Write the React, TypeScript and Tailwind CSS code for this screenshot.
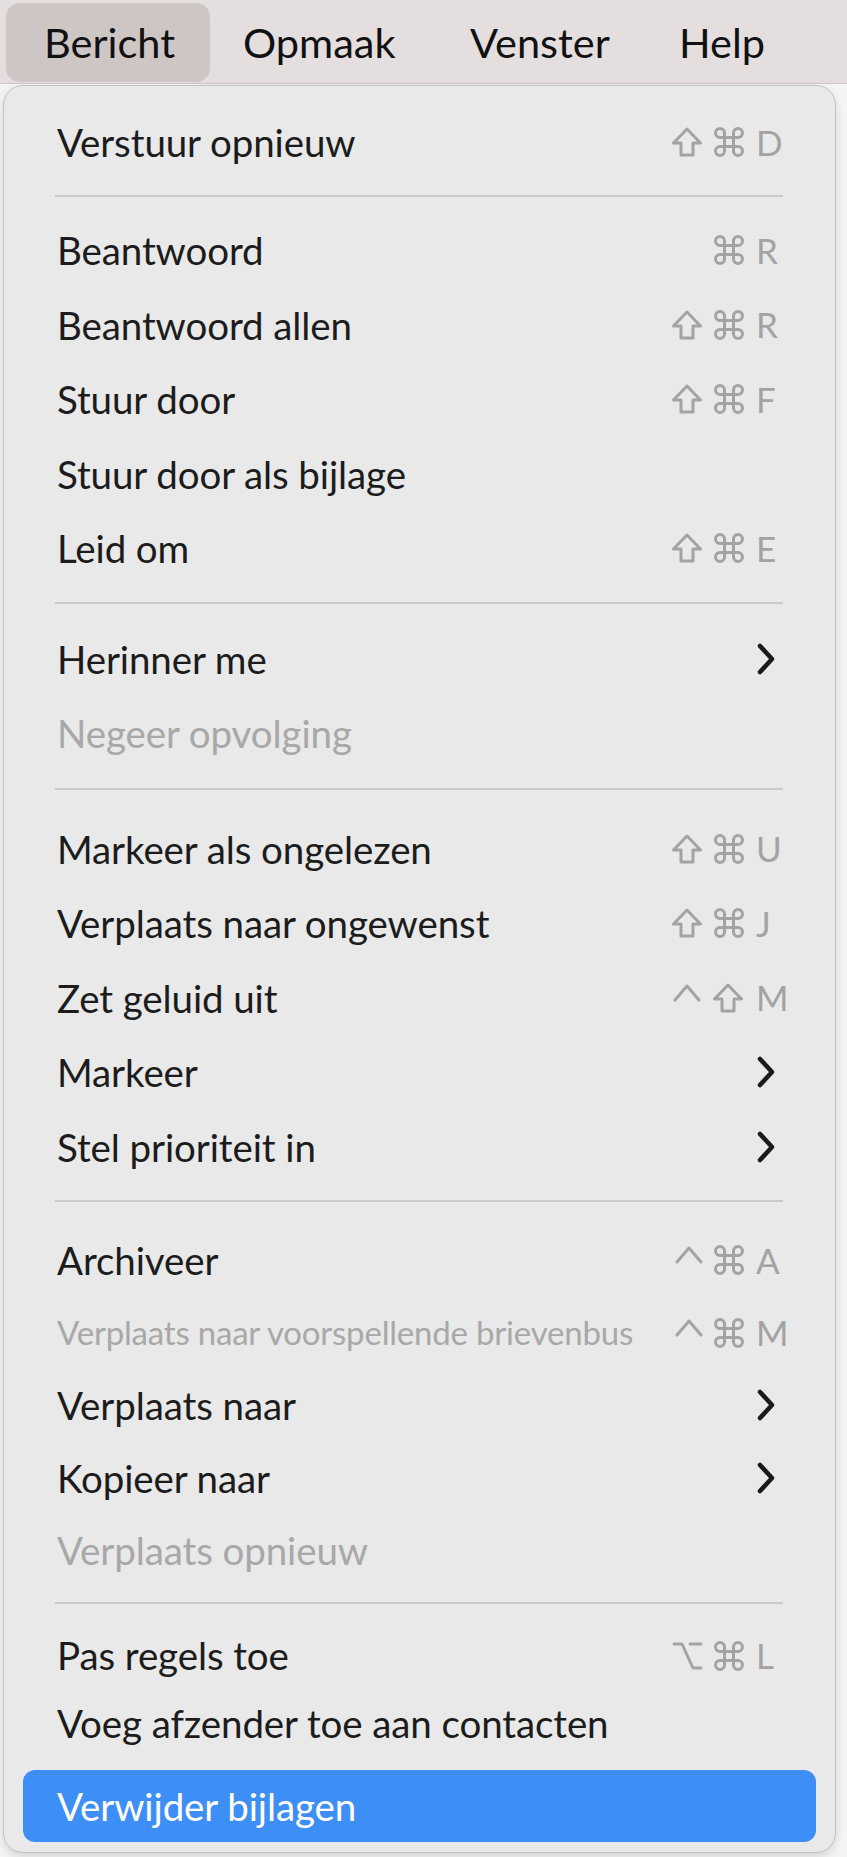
import React from "react";

type Mod = "shift" | "cmd" | "ctrl" | "opt";

type Item = {
  label: string;
  mods?: Mod[];
  key?: string;
  sub?: boolean;
  disabled?: boolean;
  small?: boolean;
  h: string;
  extra?: string;
  active?: boolean;
};

function ModIcon({ m }: { m: Mod }) {
  const c = "#a3a3a3";
  if (m === "shift") {
    return (
      <svg width="32" height="30" viewBox="0 0 32 30" className="block">
        <path
          d="M16 2 L29.5 16 H22 V28 H10 V16 H2.5 Z"
          fill="none"
          stroke={c}
          strokeWidth="3"
          strokeLinejoin="round"
        />
      </svg>
    );
  }
  if (m === "cmd") {
    return (
      <svg width="30" height="30" viewBox="2 2 20 20" className="block">
        <path
          d="M15 6v12a3 3 0 1 0 3-3H6a3 3 0 1 0 3 3V6a3 3 0 1 0-3 3h12a3 3 0 1 0-3-3"
          fill="none"
          stroke={c}
          strokeWidth="2"
          strokeLinecap="round"
          strokeLinejoin="round"
        />
      </svg>
    );
  }
  if (m === "ctrl") {
    return (
      <svg width="28" height="30" viewBox="0 0 28 30" className="block">
        <polyline
          points="2,17 14,3 26,17"
          fill="none"
          stroke={c}
          strokeWidth="3"
          strokeLinecap="round"
          strokeLinejoin="round"
        />
      </svg>
    );
  }
  return (
    <svg width="31" height="30" viewBox="0 0 31 30" className="block">
      <path
        d="M2 3 H10 L21 27 H29 M18 3 H29"
        fill="none"
        stroke={c}
        strokeWidth="3"
        strokeLinecap="round"
        strokeLinejoin="round"
      />
    </svg>
  );
}

function Chevron({ white }: { white?: boolean }) {
  return (
    <svg width="20" height="34" viewBox="0 0 20 34" className="block">
      <polyline
        points="4,4 16,17 4,30"
        fill="none"
        stroke={white ? "#ffffff" : "#1a1a1a"}
        strokeWidth="4.5"
        strokeLinecap="round"
        strokeLinejoin="round"
      />
    </svg>
  );
}

function Row({ it }: { it: Item }) {
  const textColor = it.active
    ? "text-white"
    : it.disabled
    ? "text-[#a8a8a8]"
    : "text-[#1c1c1c]";
  return (
    <div
      className={`${it.h} ${it.extra ?? ""} ${
        it.active ? "bg-[#3e8ef7] rounded-[12px]" : ""
      } flex items-center pl-[34px] pr-[30px]`}
    >
      <div
        className={`flex-1 ${textColor} ${
          it.small ? "text-[33px] tracking-[-0.2px]" : "text-[38.5px] tracking-[-0.1px]"
        } leading-none whitespace-nowrap`}
      >
        {it.label}
      </div>
      {it.mods && (
        <div className="flex items-center gap-[11px] mr-[12px]">
          {it.mods.map((m, i) => (
            <ModIcon key={i} m={m} />
          ))}
        </div>
      )}
      {(it.key || it.sub || it.mods) && (
        <div className="w-[30px] flex items-center">
          {it.key && (
            <span className="text-[#a3a3a3] text-[35px] leading-none">
              {it.key}
            </span>
          )}
          {it.sub && <Chevron white={it.active} />}
        </div>
      )}
    </div>
  );
}

function Sep({ cls }: { cls: string }) {
  return <div className={`${cls} ml-[32px] w-[728px] h-[2px] bg-[#cbcbcb]`} />;
}

export default function App() {
  const s1: Item[] = [
    { label: "Verstuur opnieuw", mods: ["shift", "cmd"], key: "D", h: "h-[74px]" },
  ];
  const s2: Item[] = [
    { label: "Beantwoord", mods: ["cmd"], key: "R", h: "h-[74.5px]" },
    { label: "Beantwoord allen", mods: ["shift", "cmd"], key: "R", h: "h-[74.5px]" },
    { label: "Stuur door", mods: ["shift", "cmd"], key: "F", h: "h-[74.5px]" },
    { label: "Stuur door als bijlage", h: "h-[74.5px]" },
    { label: "Leid om", mods: ["shift", "cmd"], key: "E", h: "h-[74.5px]" },
  ];
  const s3: Item[] = [
    { label: "Herinner me", sub: true, h: "h-[74.5px]" },
    { label: "Negeer opvolging", disabled: true, h: "h-[74.5px]" },
  ];
  const s4: Item[] = [
    { label: "Markeer als ongelezen", mods: ["shift", "cmd"], key: "U", h: "h-[74.5px]" },
    { label: "Verplaats naar ongewenst", mods: ["shift", "cmd"], key: "J", h: "h-[74.5px]" },
    { label: "Zet geluid uit", mods: ["ctrl", "shift"], key: "M", h: "h-[74.5px]" },
    { label: "Markeer", sub: true, h: "h-[74.5px]" },
    { label: "Stel prioriteit in", sub: true, h: "h-[74.5px]" },
  ];
  const s5: Item[] = [
    { label: "Archiveer", mods: ["ctrl", "cmd"], key: "A", h: "h-[72.5px]" },
    {
      label: "Verplaats naar voorspellende brievenbus",
      mods: ["ctrl", "cmd"],
      key: "M",
      disabled: true,
      small: true,
      h: "h-[72.5px]",
    },
    { label: "Verplaats naar", sub: true, h: "h-[72.5px]" },
    { label: "Kopieer naar", sub: true, h: "h-[72.5px]" },
    { label: "Verplaats opnieuw", disabled: true, h: "h-[72.5px]" },
  ];
  const s6: Item[] = [
    { label: "Pas regels toe", mods: ["opt", "cmd"], key: "L", h: "h-[72px]" },
    { label: "Voeg afzender toe aan contacten", h: "h-[64px]" },
    {
      label: "Verwijder bijlagen",
      h: "h-[72px]",
      extra: "mt-[14.5px]",
      active: true,
    },
  ];

  return (
    <div className="w-[847px] h-[1857px] bg-[#f4f4f4] overflow-hidden font-['Lato',sans-serif]">
      {/* menu bar */}
      <div className="h-[84px] bg-[#e4dfde] border-b border-[#cdc8c7] flex items-start pt-[3px] pl-[6px]">
        <div className="h-[79px] w-[204px] rounded-[14px] bg-[#cdc6c5] flex items-center pl-[38px] text-[41.5px] text-[#111] leading-none">
          Bericht
        </div>
        <div className="h-[79px] flex items-center pl-[33px] w-[260px] text-[41.5px] text-[#111] leading-none">
          Opmaak
        </div>
        <div className="h-[79px] flex items-center w-[209px] text-[41.5px] text-[#111] leading-none">
          Venster
        </div>
        <div className="h-[79px] flex items-center text-[41.5px] text-[#111] leading-none">
          Help
        </div>
      </div>

      {/* dropdown */}
      <div className="ml-[3px] mt-[1px] w-[833px] h-[1768px] bg-[#e9e9e9] border border-[#c2c2c2] rounded-[20px] shadow-[0_4px_10px_rgba(0,0,0,0.12)] px-[19px] pt-[19px]">
        {s1.map((it, i) => (
          <Row key={i} it={it} />
        ))}
        <Sep cls="mt-[16px] mb-[16px]" />
        {s2.map((it, i) => (
          <Row key={i} it={it} />
        ))}
        <Sep cls="mt-[16px] mb-[18px]" />
        {s3.map((it, i) => (
          <Row key={i} it={it} />
        ))}
        <Sep cls="mt-[17px] mb-[22px]" />
        {s4.map((it, i) => (
          <Row key={i} it={it} />
        ))}
        <Sep cls="mt-[16px] mb-[22px]" />
        {s5.map((it, i) => (
          <Row key={i} it={it} />
        ))}
        <Sep cls="mt-[15px] mb-[16px]" />
        {s6.map((it, i) => (
          <Row key={i} it={it} />
        ))}
      </div>
    </div>
  );
}
